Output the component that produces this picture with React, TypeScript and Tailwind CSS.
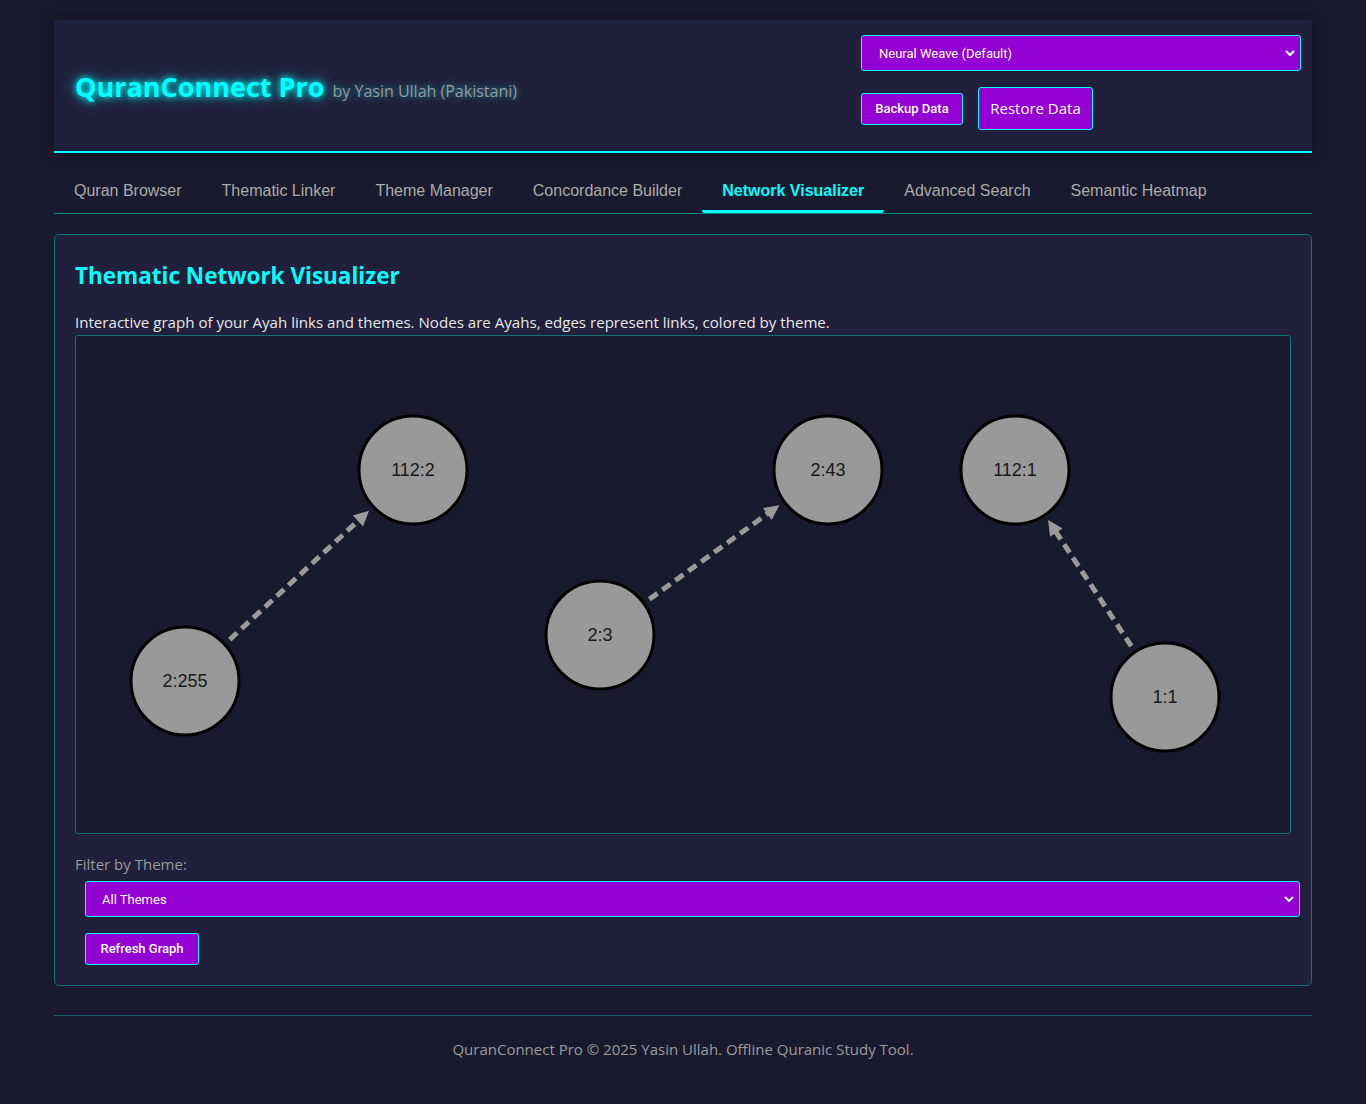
import React from 'react';

type Node = { id: string; x: number; y: number };
type Edge = { from: string; to: string };

const nodes: Node[] = [
  { id: '112:2', x: 337, y: 134 },
  { id: '2:255', x: 109, y: 345 },
  { id: '2:43', x: 752, y: 134 },
  { id: '2:3', x: 524, y: 299 },
  { id: '112:1', x: 939, y: 134 },
  { id: '1:1', x: 1089, y: 361 },
];

const edges: Edge[] = [
  { from: '2:255', to: '112:2' },
  { from: '2:3', to: '2:43' },
  { from: '1:1', to: '112:1' },
];

const tabs = [
  'Quran Browser',
  'Thematic Linker',
  'Theme Manager',
  'Concordance Builder',
  'Network Visualizer',
  'Advanced Search',
  'Semantic Heatmap',
];

const segoe = { fontFamily: '"Open Sans", "Noto Sans", sans-serif' };

function Chevron() {
  return (
    <svg width="10" height="7" viewBox="0 0 10 7" className="absolute right-[6px] top-1/2 -translate-y-1/2 pointer-events-none">
      <path d="M1 1.5 L5 5.5 L9 1.5" stroke="white" strokeWidth="2" fill="none" />
    </svg>
  );
}

function Graph() {
  const byId = (id: string) => nodes.find((n) => n.id === id)!;
  return (
    <svg width="100%" height="100%" className="block">
      {edges.map((e) => {
        const a = byId(e.from);
        const b = byId(e.to);
        const dx = b.x - a.x;
        const dy = b.y - a.y;
        const len = Math.hypot(dx, dy);
        const ux = dx / len;
        const uy = dy / len;
        const sx = a.x + ux * 61;
        const sy = a.y + uy * 61;
        const tx = b.x - ux * 60;
        const ty = b.y - uy * 60;
        const bx = tx - ux * 15;
        const by = ty - uy * 15;
        const px = -uy * 7.5;
        const py = ux * 7.5;
        return (
          <g key={e.from + e.to}>
            <line x1={sx} y1={sy} x2={bx + ux * 2} y2={by + uy * 2} stroke="#9a9a9a" strokeWidth={5} strokeDasharray="10 6" />
            <polygon points={`${tx},${ty} ${bx + px},${by + py} ${bx - px},${by - py}`} fill="#9a9a9a" />
          </g>
        );
      })}
      {nodes.map((n) => (
        <g key={n.id}>
          <circle cx={n.x} cy={n.y} r={54} fill="#999999" stroke="#000" strokeWidth={3} />
          <text
            x={n.x}
            y={n.y + 6}
            textAnchor="middle"
            fontSize="18"
            fill="#1a1a1a"
            style={{ fontFamily: '"Liberation Sans", Arial, sans-serif' }}
          >
            {n.id}
          </text>
        </g>
      ))}
    </svg>
  );
}

export default function App() {
  return (
    <div className="min-h-screen bg-[#1a1a2e] pt-5 pb-6 text-[#e0e0e0]" style={segoe}>
      <div className="w-[1258px] mx-auto">
        {/* Header */}
        <header className="flex items-center justify-between bg-[#20203c] border-b-2 border-[#00ffff] pl-[21px] pr-[11px] pt-[15px] pb-[21px] shadow-[0_0_12px_rgba(0,0,0,0.35)]">
          <div className="mt-[8px] flex items-baseline gap-[8px]">
            <h1 className="text-[27px] font-bold text-[#00ffff] leading-[40px] [text-shadow:0_0_6px_#00ffff,0_0_14px_rgba(0,255,255,0.7)]">
              QuranConnect Pro
            </h1>
            <span className="text-[16px] text-[#999] [text-shadow:0_0_7px_rgba(0,255,255,0.6)]">
              by Yasin Ullah (Pakistani)
            </span>
          </div>
          <div className="w-[440px] flex flex-col">
            <div className="relative">
              <select
                className="appearance-none w-full h-9 bg-[#9400d3] text-white text-[13px] border border-[#00ffff] rounded-[3px] pl-[17px] pt-[2px] outline-none"
                style={{ fontFamily: 'Roboto, sans-serif' }}
                defaultValue="neural"
              >
                <option value="neural">Neural Weave (Default)</option>
              </select>
              <Chevron />
            </div>
            <div className="flex items-center gap-[15px] mt-4">
              <button
                className="h-8 w-[102px] bg-[#9400d3] text-white text-[13px] font-medium border border-[#00ffff] rounded-[3px]"
                style={{ fontFamily: 'Roboto, sans-serif' }}
              >
                Backup Data
              </button>
              <button className="h-[43px] w-[115px] bg-[#9400d3] text-white text-[15px] border border-[#00ffff] rounded-[3px]">
                Restore Data
              </button>
            </div>
          </div>
        </header>

        {/* Tabs */}
        <nav className="mt-4 flex border-b border-b-[#008b8b]" style={{ fontFamily: '"Liberation Sans", Arial, sans-serif' }}>
          {tabs.map((t) => {
            const active = t === 'Network Visualizer';
            return (
              <button
                key={t}
                className={
                  active
                    ? 'px-5 pt-[13px] pb-[10px] text-[16px] leading-[18px] font-bold text-[#00ffff] border-b-[3px] border-[#00ffff] rounded-b-[3px]'
                    : 'px-5 pt-[13px] pb-[10px] text-[16px] leading-[18px] text-[#aaaaaa] border-b-[3px] border-transparent'
                }
              >
                {t}
              </button>
            );
          })}
        </nav>

        {/* Card */}
        <section className="mt-5 bg-[#20203c] border border-[#0f7478] rounded-[5px] p-5">
          <h2 className="mt-[3px] text-[22.5px] leading-[36px] font-bold text-[#00ffff]">Thematic Network Visualizer</h2>
          <p className="mt-[16px] text-[15.1px] leading-[24px] text-[#e8e8e8]">
            Interactive graph of your Ayah links and themes. Nodes are Ayahs, edges represent links, colored by theme.
          </p>
          <div className="mt-px h-[499px] bg-[#1a1a2e] border border-[#0f7478] rounded-[3px] overflow-hidden">
            <Graph />
          </div>

          <label className="block mt-[18px] text-[15px] leading-[24px] text-[#9a9a9a]">Filter by Theme:</label>
          <div className="relative mt-[5px] ml-[10px] w-[1215px]">
            <select
              className="appearance-none w-full h-9 bg-[#9400d3] text-white text-[13px] border border-[#00ffff] rounded-[3px] pl-[16px] pt-[2px] outline-none"
              style={{ fontFamily: 'Roboto, sans-serif' }}
              defaultValue="all"
            >
              <option value="all">All Themes</option>
            </select>
            <Chevron />
          </div>
          <button
            className="mt-4 ml-[10px] h-8 w-[114px] bg-[#9400d3] text-white text-[13px] font-medium border border-[#00ffff] rounded-[3px]"
            style={{ fontFamily: 'Roboto, sans-serif' }}
          >
            Refresh Graph
          </button>
        </section>

        {/* Footer */}
        <footer className="mt-[29px] border-t border-[#1c5f6c] pt-[21px] text-center text-[15px] leading-[24px] text-[#9a9a9a]">
          QuranConnect Pro © 2025 Yasin Ullah. Offline Quranic Study Tool.
        </footer>
      </div>
    </div>
  );
}
